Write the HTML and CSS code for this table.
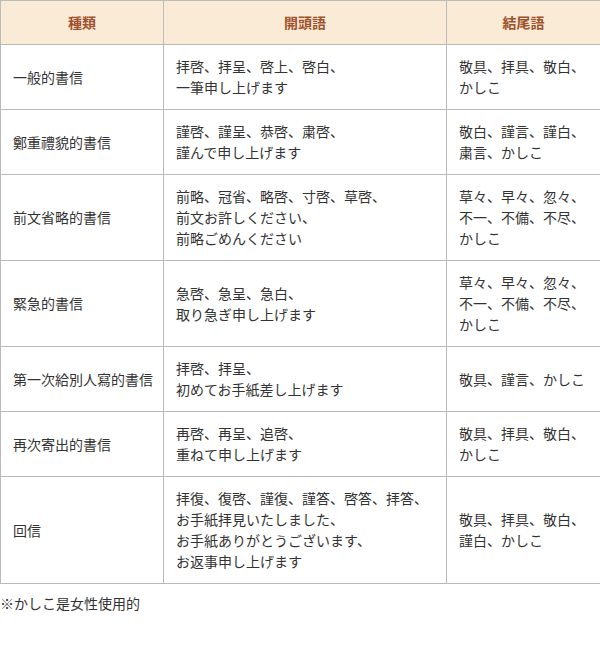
FILE: index.html
```html
<!DOCTYPE html>
<html lang="ja">
<head>
<meta charset="utf-8">
<link rel="stylesheet" href="styles.css">
</head>
<body>
<table class="letters">
  <colgroup>
    <col class="c1">
    <col class="c2">
    <col class="c3">
  </colgroup>
  <thead>
    <tr><th>種類</th><th>開頭語</th><th>結尾語</th></tr>
  </thead>
  <tbody>
    <tr><td>一般的書信</td><td>拝啓、拝呈、啓上、啓白、<br>一筆申し上げます</td><td>敬具、拝具、敬白、<br>かしこ</td></tr>
    <tr><td>鄭重禮貌的書信</td><td>謹啓、謹呈、恭啓、粛啓、<br>謹んで申し上げます</td><td>敬白、謹言、謹白、<br>粛言、かしこ</td></tr>
    <tr><td>前文省略的書信</td><td>前略、冠省、略啓、寸啓、草啓、<br>前文お許しください、<br>前略ごめんください</td><td>草々、早々、忽々、<br>不一、不備、不尽、<br>かしこ</td></tr>
    <tr><td>緊急的書信</td><td>急啓、急呈、急白、<br>取り急ぎ申し上げます</td><td>草々、早々、忽々、<br>不一、不備、不尽、<br>かしこ</td></tr>
    <tr><td>第一次給別人寫的書信</td><td>拝啓、拝呈、<br>初めてお手紙差し上げます</td><td>敬具、謹言、かしこ</td></tr>
    <tr><td>再次寄出的書信</td><td>再啓、再呈、追啓、<br>重ねて申し上げます</td><td>敬具、拝具、敬白、<br>かしこ</td></tr>
    <tr><td>回信</td><td>拝復、復啓、謹復、謹答、啓答、拝答、<br>お手紙拝見いたしました、<br>お手紙ありがとうございます、<br>お返事申し上げます</td><td>敬具、拝具、敬白、<br>謹白、かしこ</td></tr>
  </tbody>
</table>
<p class="note">※かしこ是女性使用的</p>
</body>
</html>
```
FILE: styles.css
```css
html, body {
  margin: 0;
  padding: 0;
  background: #fff;
}
body {
  font-family: "Noto Sans CJK JP", "Noto Sans", sans-serif;
  font-size: 14px;
  line-height: 21px;
  color: #333;
}
.letters {
  width: 600px;
  border-collapse: collapse;
  table-layout: fixed;
}
.c1 { width: 163px; }
.c2 { width: 283px; }
.c3 { width: 154px; }
.letters th,
.letters td {
  border: 1px solid #bbb;
  padding: 11px 12px;
  vertical-align: middle;
  text-align: left;
}
.letters td:first-child {
  padding-right: 6px;
  white-space: nowrap;
}
.letters th {
  background: #faebd7;
  color: #a0522d;
  font-weight: bold;
  text-align: center;
}
.note {
  margin: 9px 0 0;
}
```
